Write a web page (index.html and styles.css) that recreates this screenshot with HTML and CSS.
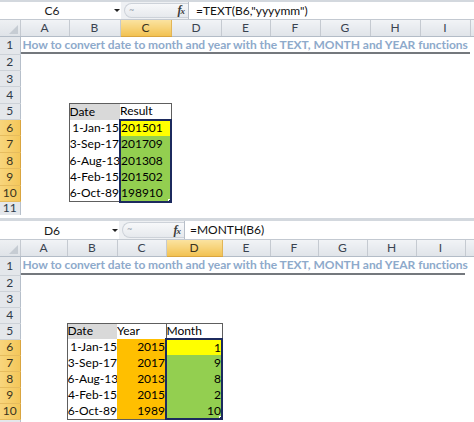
FILE: index.html
```html
<!DOCTYPE html>
<html lang="en">
<head>
<meta charset="utf-8">
<title>Excel TEXT, MONTH and YEAR</title>
<link rel="stylesheet" href="styles.css">
</head>
<body>
<div class="app">
  <section class="pane pane-top">
    <div class="strip"></div>
    <div class="fbar">
      <div class="namebox"><span class="ref">C6</span><span class="caret"></span></div>
      <div class="fxwrap"><div class="bubble"><span class="grip">~</span><span class="fx"><i>f</i><span class="fx-x">x</span></span></div></div>
      <div class="formula">=TEXT(B6,"yyyymm")</div>
    </div>
    <table class="sheet">
      <colgroup>
        <col class="w20"><col class="w49"><col class="w51"><col class="w51"><col class="w50"><col class="w49"><col class="w50"><col class="w50"><col class="w50"><col class="w50"><col class="w4">
      </colgroup>
      <tr class="hdr">
        <th class="corner"><span class="corner-tri"></span></th>
        <th class="ch">A</th><th class="ch">B</th><th class="ch sel-ch">C</th><th class="ch">D</th><th class="ch">E</th><th class="ch">F</th><th class="ch">G</th><th class="ch">H</th><th class="ch">I</th><th class="ch"></th>
      </tr>
      <tr class="r1">
        <th class="rh">1</th><td class="title" colspan="9">How to convert date to month and year with the TEXT, MONTH and YEAR functions</td><td></td>
      </tr>
      <tr class="row"><th class="rh">2</th><td colspan="10"></td></tr>
      <tr class="row"><th class="rh">3</th><td colspan="10"></td></tr>
      <tr class="row"><th class="rh">4</th><td colspan="10"></td></tr>
      <tr class="row"><th class="rh">5</th><td></td><td class="txt gray t-top t-left">Date</td><td class="txt t-top t-right">Result</td><td colspan="7"></td></tr>
      <tr class="row"><th class="rh sel-rh">6</th><td></td><td class="num t-left">1-Jan-15</td><td class="txt yellow sel-t sel-l sel-r">201501</td><td colspan="7"></td></tr>
      <tr class="row"><th class="rh sel-rh">7</th><td></td><td class="num t-left">3-Sep-17</td><td class="txt green sel-l sel-r">201709</td><td colspan="7"></td></tr>
      <tr class="row"><th class="rh sel-rh">8</th><td></td><td class="num t-left">6-Aug-13</td><td class="txt green sel-l sel-r">201308</td><td colspan="7"></td></tr>
      <tr class="row"><th class="rh sel-rh">9</th><td></td><td class="num t-left">4-Feb-15</td><td class="txt green sel-l sel-r">201502</td><td colspan="7"></td></tr>
      <tr class="row"><th class="rh sel-rh">10</th><td></td><td class="num t-left t-bottom">6-Oct-89</td><td class="txt green sel-l sel-r sel-b handle-cell">198910<span class="handle"></span></td><td colspan="7"></td></tr>
      <tr class="row row-last"><th class="rh">11</th><td colspan="10"></td></tr>
    </table>
  </section>

  <section class="pane pane-bottom">
    <div class="strip"></div>
    <div class="fbar">
      <div class="namebox"><span class="ref">D6</span><span class="caret"></span></div>
      <div class="fxwrap"><div class="bubble"><span class="grip">~</span><span class="fx"><i>f</i><span class="fx-x">x</span></span></div></div>
      <div class="formula">=MONTH(B6)</div>
    </div>
    <table class="sheet">
      <colgroup>
        <col class="w20"><col class="w47"><col class="w50"><col class="w49"><col class="w56"><col class="w48"><col class="w48"><col class="w49"><col class="w49"><col class="w49"><col class="w9">
      </colgroup>
      <tr class="hdr">
        <th class="corner"><span class="corner-tri"></span></th>
        <th class="ch">A</th><th class="ch">B</th><th class="ch">C</th><th class="ch sel-ch">D</th><th class="ch">E</th><th class="ch">F</th><th class="ch">G</th><th class="ch">H</th><th class="ch">I</th><th class="ch"></th>
      </tr>
      <tr class="r1">
        <th class="rh">1</th><td class="title" colspan="9">How to convert date to month and year with the TEXT, MONTH and YEAR functions</td><td></td>
      </tr>
      <tr class="row"><th class="rh">2</th><td colspan="10"></td></tr>
      <tr class="row"><th class="rh">3</th><td colspan="10"></td></tr>
      <tr class="row"><th class="rh">4</th><td colspan="10"></td></tr>
      <tr class="row"><th class="rh">5</th><td></td><td class="txt gray t-top t-left">Date</td><td class="txt t-top">Year</td><td class="txt t-top t-right t-left">Month</td><td colspan="6"></td></tr>
      <tr class="row"><th class="rh sel-rh">6</th><td></td><td class="num t-left">1-Jan-15</td><td class="num orange">2015</td><td class="num yellow sel-t sel-l sel-r">1</td><td colspan="6"></td></tr>
      <tr class="row"><th class="rh sel-rh">7</th><td></td><td class="num t-left">3-Sep-17</td><td class="num orange">2017</td><td class="num green sel-l sel-r">9</td><td colspan="6"></td></tr>
      <tr class="row"><th class="rh sel-rh">8</th><td></td><td class="num t-left">6-Aug-13</td><td class="num orange">2013</td><td class="num green sel-l sel-r">8</td><td colspan="6"></td></tr>
      <tr class="row"><th class="rh sel-rh">9</th><td></td><td class="num t-left">4-Feb-15</td><td class="num orange">2015</td><td class="num green sel-l sel-r">2</td><td colspan="6"></td></tr>
      <tr class="row"><th class="rh sel-rh">10</th><td></td><td class="num t-left t-bottom">6-Oct-89</td><td class="num orange t-bottom">1989</td><td class="num green sel-l sel-r sel-b handle-cell">10<span class="handle"></span></td><td colspan="6"></td></tr>
      <tr class="row"><th class="rh"></th><td colspan="10"></td></tr>
    </table>
  </section>
</div>
</body>
</html>
```

FILE: styles.css
```css
html, body {
  margin: 0;
  padding: 0;
  background: #ffffff;
}

body {
  font-family: Lato, "Open Sans", "Liberation Sans", sans-serif;
  color: #000;
}

.app {
  width: 474px;
  height: 422px;
  overflow: hidden;
}

.pane {
  overflow: hidden;
}

.pane-top {
  height: 215px;
}

.pane-bottom {
  height: 207px;
}

.strip {
  height: 2px;
  background: #d3d8de;
}

.pane-bottom .strip {
  height: 3px;
  margin-top: 3px;
}

/* ---------- formula bar ---------- */
.fbar {
  display: flex;
  height: 17px;
  border-bottom: 1px solid #c3c9d1;
  background: #ffffff;
}

.pane-bottom .fbar {
  height: 18px;
}

.namebox {
  width: 121px;
  display: flex;
  align-items: center;
  flex: none;
}

.pane-bottom .namebox {
  width: 119px;
}

.ref {
  width: 104px;
  text-align: center;
  font-size: 12px;
  color: #1a1a1a;
}

.caret {
  width: 0;
  height: 0;
  margin-left: 10px;
  border-left: 3px solid transparent;
  border-right: 3px solid transparent;
  border-top: 3px solid #222;
}

.pane-bottom .caret {
  margin-left: 8px;
}

.fxwrap {
  width: 68px;
  flex: none;
  display: flex;
  padding: 1px 0 1px 3px;
  box-sizing: border-box;
  background: #eef0f3;
  border-right: 1px solid #b7bec8;
}

.pane-bottom .fxwrap {
  width: 66px;
}

.bubble {
  flex: 1;
  display: flex;
  align-items: center;
  justify-content: space-between;
  border: 1px solid #cdd2d9;
  border-right: none;
  border-radius: 9px 0 0 9px;
  background: linear-gradient(#f7f8fa, #e6e9ed);
  padding: 0 4px 0 4px;
}

.grip {
  font-size: 9px;
  line-height: 9px;
  color: #9aa2ad;
  align-self: flex-start;
  margin-top: 1px;
}

.fx {
  font-family: "Liberation Serif", "DejaVu Serif", serif;
  font-size: 12px;
  font-weight: bold;
  color: #3b3b3b;
  letter-spacing: -1px;
}

.fx-x {
  font-size: 9px;
  font-style: italic;
}

.formula {
  flex: 1;
  padding-left: 7px;
  font-size: 12px;
  line-height: 17px;
  white-space: nowrap;
  color: #111;
}

.pane-bottom .formula {
  padding-left: 5px;
  line-height: 18px;
}

/* ---------- sheet ---------- */
.sheet {
  border-collapse: collapse;
  table-layout: fixed;
  width: 474px;
}

.w4 { width: 4px; }
.w9 { width: 9px; }
.w20 { width: 20px; }
.w47 { width: 47px; }
.w48 { width: 48px; }
.w49 { width: 49px; }
.w50 { width: 50px; }
.w51 { width: 51px; }
.w56 { width: 56px; }

.sheet th,
.sheet td {
  padding: 0;
  white-space: nowrap;
  overflow: hidden;
  font-size: 12px;
  font-weight: normal;
  line-height: 14px;
}

.hdr {
  height: 16px;
}

.corner {
  background: linear-gradient(#eef0f3, #dfe3e8);
  border-right: 1px solid #c5cad1;
  border-bottom: 1px solid #b3bcc7;
  position: relative;
}

.corner-tri {
  position: absolute;
  right: 2px;
  bottom: 2px;
  width: 0;
  height: 0;
  border-left: 9px solid transparent;
  border-bottom: 9px solid #c6ccd3;
}

.ch {
  background: linear-gradient(#f1f3f6, #e0e4e9);
  border-right: 1px solid #c5cad1;
  border-bottom: 1px solid #b3bcc7;
  color: #3a4350;
  text-align: center;
}

.sel-ch {
  background: linear-gradient(#fbe3a0, #f2c252);
  border-right-color: #e2b556;
  border-bottom-color: #d9a540;
  color: #3a3320;
}

.rh {
  background: #e4e7eb;
  border-right: 1px solid #b6bfca;
  border-bottom: 1px solid #cdd2d8;
  color: #2f3a48;
  text-align: center;
}

.sel-rh {
  background: linear-gradient(90deg, #f8d57c, #f4c75a);
  border-bottom-color: #e6bc5e;
  border-right-color: #d9a540;
  color: #3a3320;
}

.pane-top .r1 {
  height: 18px;
}

.pane-bottom .r1 {
  height: 19px;
}

.pane-top .row {
  height: 16.4px;
}

.pane-bottom .row {
  height: 16px;
}

.pane-top .row-last th {
  vertical-align: top;
  line-height: 12px;
}

.sheet .title {
  box-shadow: inset 0 -2px 0 #74787d;
  color: #8eaacb;
  font-weight: bold;
  letter-spacing: -0.05px;
  padding-left: 2px;
  padding-bottom: 1px;
  overflow: visible;
}

.txt {
  text-align: left;
  padding-left: 3px;
}

.num {
  text-align: right;
  padding-right: 2px;
}

.gray { background: #d9d9d9; }
.yellow { background: #ffff00; }
.green { background: #93cf50; }
.orange { background: #ffbf00; }

.t-top { border-top: 1px solid #5e5e5e; }
.t-left { border-left: 1px solid #5e5e5e; }
.t-right { border-right: 1px solid #5e5e5e; }
.t-bottom { border-bottom: 1px solid #5e5e5e; }

.sel-t { border-top: 2px solid #1c2a5e; }
.sel-l { border-left: 2px solid #1c2a5e; }
.sel-r { border-right: 2px solid #1c2a5e; }
.sel-b { border-bottom: 2px solid #1c2a5e; }

.handle-cell {
  position: relative;
  overflow: visible;
}

.handle {
  position: absolute;
  right: -4px;
  bottom: -4px;
  width: 4px;
  height: 4px;
  background: #1c2a5e;
  border: 1px solid #ffffff;
}
```
